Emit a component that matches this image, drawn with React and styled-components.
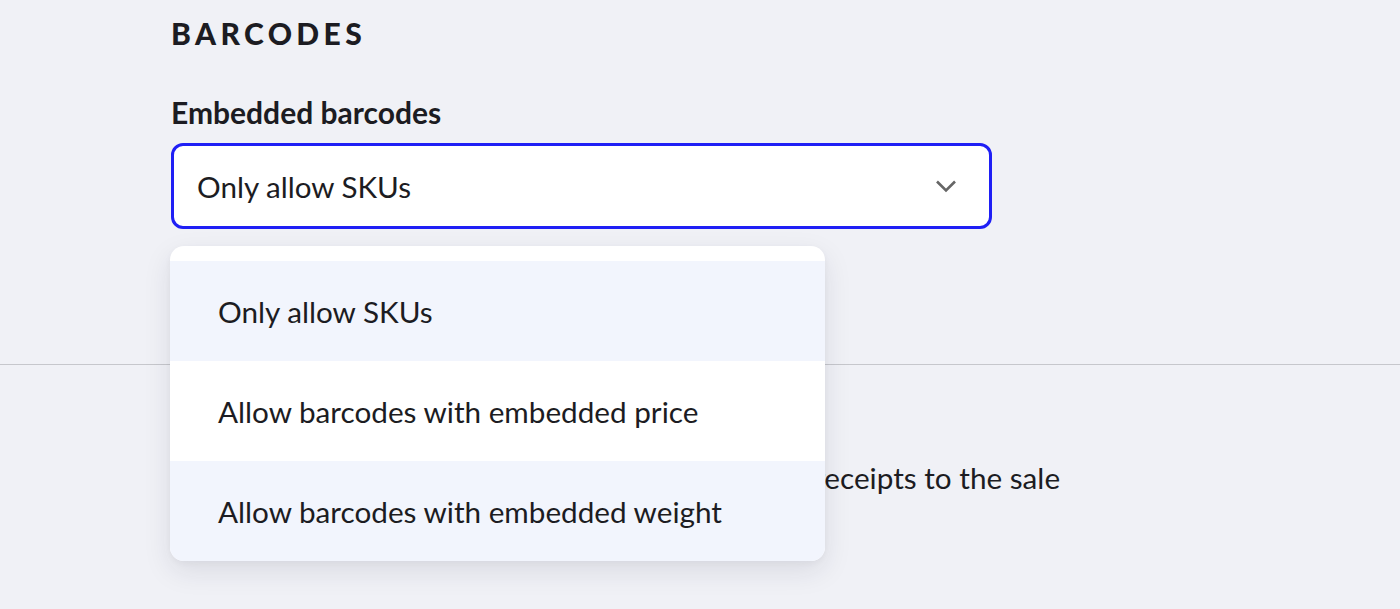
import React, { useState } from 'react';
import styled, { createGlobalStyle } from 'styled-components';

const GlobalStyle = createGlobalStyle`
  html, body {
    margin: 0;
    padding: 0;
    background: #f0f1f6;
    font-family: Lato, "Open Sans", sans-serif;
    color: #1c1c22;
  }
`;

const Page = styled.div`
  min-height: 609px;
  overflow: hidden;
`;

const Section = styled.section`
  padding: ${(p) => p.$pad || '15px 171px 0'};
`;

const Heading = styled.h2`
  margin: 0;
  font-size: 30px;
  line-height: 36px;
  font-weight: 900;
  letter-spacing: 4.4px;
  text-transform: uppercase;
`;

const Label = styled.div`
  margin-top: 43px;
  font-size: 30px;
  line-height: 36px;
  font-weight: 700;
`;

const SelectWrap = styled.div`
  position: relative;
  margin-top: 13px;
  width: 821px;
`;

const SelectBox = styled.button`
  box-sizing: border-box;
  width: 100%;
  height: 86px;
  display: flex;
  align-items: center;
  justify-content: space-between;
  padding: 0 32px 0 23px;
  background: #fff;
  border: 3px solid #1f1ff5;
  border-radius: 12px;
  font-family: inherit;
  font-size: 29.6px;
  color: #1c1c22;
  cursor: pointer;
`;

const Menu = styled.ul`
  position: absolute;
  top: 103px;
  left: -1px;
  width: 655px;
  margin: 0;
  padding: 15px 0 0;
  list-style: none;
  background: #fff;
  border-radius: 14px;
  overflow: hidden;
  box-shadow: 0 10px 28px rgba(30, 30, 60, 0.1), 0 2px 6px rgba(30, 30, 60, 0.04);
  z-index: 2;
`;

const Option = styled.li`
  height: 100px;
  display: flex;
  align-items: center;
  padding-left: 48px;
  font-size: 29.7px;
  background: ${(p) => (p.$active ? '#f2f5fd' : '#fff')};
  cursor: pointer;
`;

const Divider = styled.hr`
  margin: 135px 0 0;
  border: none;
  border-top: 1.5px solid #c6c7cc;
`;

const ToggleRow = styled.label`
  display: flex;
  align-items: center;
  gap: 22px;
  margin-top: 95px;
  font-size: 29.7px;
  line-height: 36px;
`;

const Switch = styled.span`
  position: relative;
  width: 52px;
  height: 30px;
  border-radius: 15px;
  background: #c9cad1;
  flex: none;

  &::after {
    content: '';
    position: absolute;
    top: 3px;
    left: 3px;
    width: 24px;
    height: 24px;
    border-radius: 50%;
    background: #fff;
  }
`;

const Chevron = () => (
  <svg width="22" height="14" viewBox="0 0 22 14" fill="none">
    <path d="M2 2.5 L11 11.5 L20 2.5" stroke="#666" strokeWidth="2.6" />
  </svg>
);

const options = [
  'Only allow SKUs',
  'Allow barcodes with embedded price',
  'Allow barcodes with embedded weight',
];

export default function App() {
  const [value] = useState(options[0]);
  const [hover] = useState(2);

  return (
    <Page>
      <GlobalStyle />
      <Section>
        <Heading>Barcodes</Heading>
        <Label>Embedded barcodes</Label>
        <SelectWrap>
          <SelectBox>
            <span>{value}</span>
            <Chevron />
          </SelectBox>
          <Menu>
            {options.map((o, i) => (
              <Option key={o} $active={o === value || i === hover}>
                {o}
              </Option>
            ))}
          </Menu>
        </SelectWrap>
      </Section>
      <Divider />
      <Section $pad="0 171px">
        <ToggleRow>
          <Switch />
          Add a charge for any printed paper or email receipts to the sale
        </ToggleRow>
      </Section>
    </Page>
  );
}
